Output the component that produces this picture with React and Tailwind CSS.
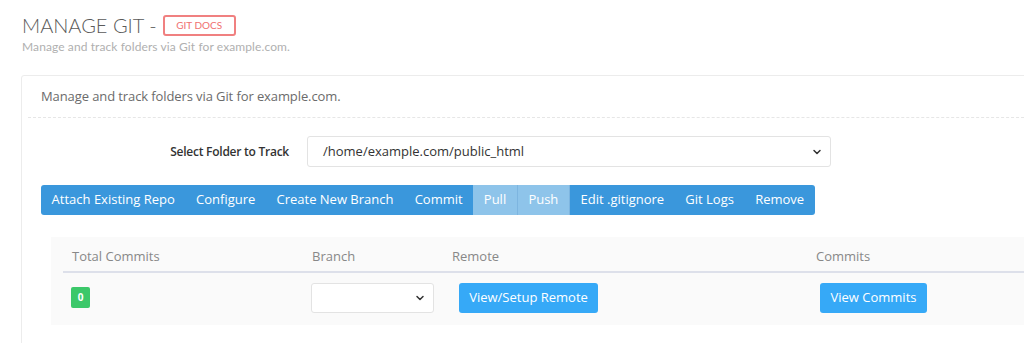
import { ChevronDown } from 'lucide-react';

const tabs = [
  { label: 'Attach Existing Repo' },
  { label: 'Configure' },
  { label: 'Create New Branch' },
  { label: 'Commit' },
  { label: 'Pull', muted: true },
  { label: 'Push', muted: true },
  { label: 'Edit .gitignore' },
  { label: 'Git Logs' },
  { label: 'Remove' },
];

export default function App() {
  return (
    <div className="w-[1024px] h-[343px] overflow-hidden bg-white font-['Open_Sans',sans-serif]">
      {/* Page title */}
      <div className="pl-[22px] pt-[13px]">
        <div className="flex items-center gap-[6px]">
          <h1 className="font-['Lato',sans-serif] font-light text-[20px] leading-[24px] text-[#5a5a5a]">
            MANAGE GIT -
          </h1>
          <span className="border-2 border-[#f08080] rounded-[3px] h-[21px] w-[73px] flex items-center justify-center text-[10px] text-[#f07070] font-['Lato',sans-serif]">
            GIT DOCS
          </span>
        </div>
        <p className="font-['Lato',sans-serif] text-[12px] leading-[14px] mt-[3px] text-[#b0b0b0] tracking-[0.1px]">
          Manage and track folders via Git for example.com.
        </p>
      </div>

      {/* Card */}
      <div className="ml-[21px] mt-[21px] w-[1040px] h-[300px] border border-[#ececec] rounded-[3px]">
        <div className="mx-[6px] h-[42px] flex items-center pl-[13px] text-[13px] text-[#6b6b6b] border-b border-dashed border-[#e6e6e6] tracking-[-0.1px]">
          Manage and track folders via Git for example.com.
        </div>

        <div className="flex items-center mt-[18px]">
          <label className="w-[267px] text-right text-[12px] font-semibold text-[#333] tracking-[-0.25px]">
            Select Folder to Track
          </label>
          <div className="ml-[18px] w-[524px] h-[31px] border border-[#e3e3e3] rounded-[3px] flex items-center justify-between pl-[15px] pr-[7px] text-[13px] text-[#333]">
            <span>/home/example.com/public_html</span>
            <ChevronDown className="w-[12px] h-[12px] text-[#333]" strokeWidth={3} />
          </div>
        </div>

        <div className="ml-[19px] mt-[18px] inline-flex h-[30px] bg-[#3a97dc] rounded-[3px] overflow-hidden">
          {tabs.map((t) => (
            <div
              key={t.label}
              className={
                t.muted
                  ? 'px-[10.6px] flex items-center text-[13px] text-white bg-[#8ec4ea] border-r border-[#7db5e0]'
                  : 'px-[10.6px] flex items-center text-[13px] text-white'
              }
            >
              {t.label}
            </div>
          ))}
        </div>

        {/* Table */}
        <div className="ml-[29px] mt-[22px] bg-[#fafafa] pl-[12px] pt-[6px] h-[88px]">
          <div className="flex items-center h-[30px] border-b-2 border-[#dde0ea] text-[13px] text-[#888]">
            <div className="w-[240px] pl-[9px]">Total Commits</div>
            <div className="w-[140px] pl-[9px]">Branch</div>
            <div className="w-[364px] pl-[9px]">Remote</div>
            <div className="pl-[9px]">Commits</div>
          </div>
          <div className="flex items-start pt-[10px]">
            <div className="w-[240px] pl-[8px]">
              <span className="inline-flex items-center justify-center w-[19px] h-[21px] rounded-[2px] bg-[#3cc86a] text-white text-[10px] font-bold">
                0
              </span>
            </div>
            <div className="w-[140px] pl-[8px]">
              <div className="w-[123px] h-[30px] border border-[#e3e3e3] rounded-[3px] bg-white flex items-center justify-end pr-[7px]">
                <ChevronDown className="w-[12px] h-[12px] text-[#333]" strokeWidth={3} />
              </div>
            </div>
            <div className="w-[364px] pl-[16px]">
              <button className="h-[30px] w-[139px] rounded-[3px] bg-[#36a9f7] text-white text-[13px]">
                View/Setup Remote
              </button>
            </div>
            <div className="pl-[13px]">
              <button className="h-[30px] w-[107px] rounded-[3px] bg-[#36a9f7] text-white text-[13px]">
                View Commits
              </button>
            </div>
          </div>
        </div>
      </div>
    </div>
  );
}
